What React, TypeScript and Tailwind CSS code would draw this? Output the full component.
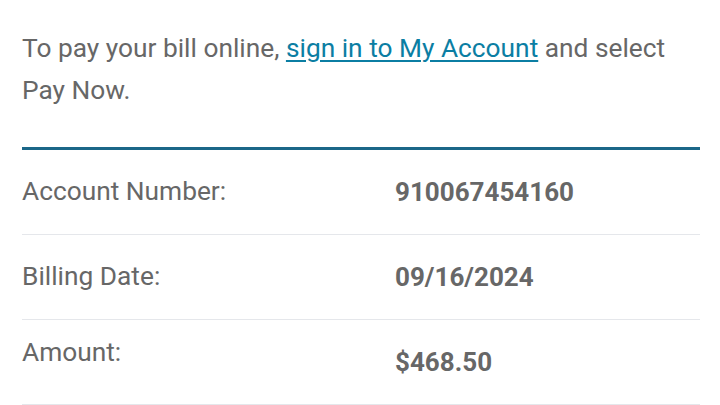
import React from 'react';

const rows = [
  { label: 'Account Number:', value: '910067454160', shift: false },
  { label: 'Billing Date:', value: '09/16/2024', shift: false },
  { label: 'Amount:', value: '$468.50', shift: true },
];

export default function App() {
  return (
    <div className="min-h-[405px] w-[720px] bg-white px-[22px] pt-[27px] font-['Roboto',sans-serif] text-[#676767]">
      {/* Intro text */}
      <p className="text-[26.3px] leading-[42px]">
        To pay your bill online,{' '}
        <a href="#" className="text-[#0b7ea3] underline underline-offset-[3px] decoration-[2px]">
          sign in to My Account
        </a>{' '}
        and select Pay Now.
      </p>

      <div className="mt-[36px] w-[678px] border-t-[3px] border-[#1b6788]">
        {rows.map((row) => (
          <div
            key={row.label}
            className="flex h-[85px] items-center border-b border-[#e5e7eb] text-[26.3px]"
          >
            <div className={row.shift ? 'w-[373px] -mt-[18px]' : 'w-[373px]'}>{row.label}</div>
            <div className="font-bold text-[26px]">{row.value}</div>
          </div>
        ))}
      </div>
    </div>
  );
}
